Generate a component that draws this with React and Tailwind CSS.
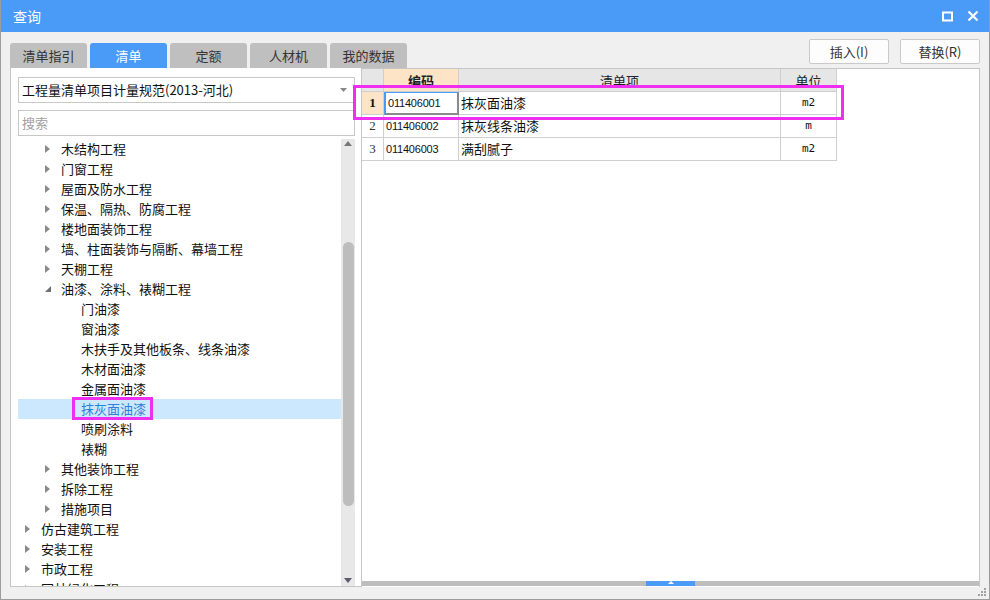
import React from 'react';

const cjk = "font-['Microsoft_YaHei','Noto_Sans_CJK_SC',sans-serif]";

const tree = [
  { l: 1, t: '木结构工程', a: 'r' },
  { l: 1, t: '门窗工程', a: 'r' },
  { l: 1, t: '屋面及防水工程', a: 'r' },
  { l: 1, t: '保温、隔热、防腐工程', a: 'r' },
  { l: 1, t: '楼地面装饰工程', a: 'r' },
  { l: 1, t: '墙、柱面装饰与隔断、幕墙工程', a: 'r' },
  { l: 1, t: '天棚工程', a: 'r' },
  { l: 1, t: '油漆、涂料、裱糊工程', a: 'd' },
  { l: 2, t: '门油漆' },
  { l: 2, t: '窗油漆' },
  { l: 2, t: '木扶手及其他板条、线条油漆' },
  { l: 2, t: '木材面油漆' },
  { l: 2, t: '金属面油漆' },
  { l: 2, t: '抹灰面油漆', sel: true },
  { l: 2, t: '喷刷涂料' },
  { l: 2, t: '裱糊' },
  { l: 1, t: '其他装饰工程', a: 'r' },
  { l: 1, t: '拆除工程', a: 'r' },
  { l: 1, t: '措施项目', a: 'r' },
  { l: 0, t: '仿古建筑工程', a: 'r' },
  { l: 0, t: '安装工程', a: 'r' },
  { l: 0, t: '市政工程', a: 'r' },
  { l: 0, t: '园林绿化工程', a: 'r' },
];

const rows = [
  { n: '1', code: '011406001', name: '抹灰面油漆', unit: 'm2' },
  { n: '2', code: '011406002', name: '抹灰线条油漆', unit: 'm' },
  { n: '3', code: '011406003', name: '满刮腻子', unit: 'm2' },
];

const tabs = ['清单指引', '清单', '定额', '人材机', '我的数据'];

const Arrow = ({ kind }) =>
  kind === 'd' ? (
    <svg width="6" height="6" viewBox="0 0 6 6">
      <path d="M6 0 L6 6 L0 6 Z" fill="#707070" />
    </svg>
  ) : (
    <svg width="5" height="8" viewBox="0 0 5 8">
      <path d="M0 0 L5 4 L0 8 Z" fill="#8a8a8a" />
    </svg>
  );

const TreeRow = ({ item }) => {
  const pad = 7 + item.l * 20;
  return (
    <div
      className={`relative flex h-[20px] shrink-0 items-center ${item.sel ? 'bg-[#cce8ff] text-[#2f7fd8]' : 'text-[#111]'}`}
      style={{ paddingLeft: pad }}
    >
      <div className="flex w-[16px] items-center">{item.a && <Arrow kind={item.a} />}</div>
      <span className="text-[13px] leading-[20px] whitespace-nowrap">{item.t}</span>
      {item.sel && (
        <div className="absolute top-[-2px] left-[54px] h-[23px] w-[81px] border-[3px] border-[#f02ef0]" />
      )}
    </div>
  );
};

const App = () => {
  return (
    <div className={`relative flex h-[600px] w-[990px] flex-col border-x border-b border-[#9c9c9c] bg-[#f0f0f0] ${cjk}`}>
      {/* title bar */}
      <div className="flex h-[32px] shrink-0 items-center justify-between bg-[#4a9af8] pr-[10px] pl-[12px]">
        <span className="text-[14px] text-white">查询</span>
        <div className="flex items-center gap-[14px]">
          <svg width="11" height="11" viewBox="0 0 11 11">
            <rect x="1" y="1.5" width="9" height="8" fill="none" stroke="#fff" strokeWidth="2" />
          </svg>
          <svg width="12" height="12" viewBox="0 0 12 12">
            <path d="M1.5 1.5 L10.5 10.5 M10.5 1.5 L1.5 10.5" stroke="#fff" strokeWidth="2.2" />
          </svg>
        </div>
      </div>

      <div className="flex flex-1 flex-col px-[9px]">
        {/* tabs + buttons */}
        <div className="flex h-[36px] shrink-0 justify-between">
          <div className="flex items-end gap-[3px]">
            {tabs.map((t) => (
              <div
                key={t}
                className={`flex h-[25px] w-[77px] items-center justify-center rounded-t-[3px] text-[13px] ${t === '清单' ? 'bg-[#4a9af8] text-white' : 'bg-[#bfbfbf] text-[#333]'}`}
              >
                {t}
              </div>
            ))}
          </div>
          <div className="flex gap-[11px] pt-[7px]">
            {['插入(I)', '替换(R)'].map((b) => (
              <div
                key={b}
                className="flex h-[25px] w-[80px] items-center justify-center rounded-[2px] border border-[#c9c9c9] bg-[#fdfdfd] text-[13px] text-[#333]"
              >
                {b}
              </div>
            ))}
          </div>
        </div>

        {/* content */}
        <div className="flex h-[519px] shrink-0">
          {/* left panel */}
          <div className="flex w-[352px] shrink-0 flex-col border-x border-b border-[#c6c6c6] bg-white pt-[9px] pl-[7px]">
            <div className="relative flex h-[26px] w-[337px] items-center border border-[#c8c8c8] pl-[3px] text-[13px] text-[#111]">
              工程量清单项目计量规范(2013-河北)
              <svg className="absolute top-[10px] right-[7px]" width="7" height="4" viewBox="0 0 7 4">
                <path d="M0 0 L7 0 L3.5 4 Z" fill="#888" />
              </svg>
            </div>
            <div className="mt-[7px] flex h-[26px] w-[337px] items-center border border-[#c8c8c8] pl-[3px] text-[13px] text-[#a0a0a0]">
              搜索
            </div>
            <div className="mt-[3px] flex min-h-0 flex-1">
              <div className="flex w-[323px] flex-col overflow-hidden">
                {tree.map((it) => (
                  <TreeRow key={it.t} item={it} />
                ))}
              </div>
              <div className="flex w-[14px] flex-col items-center bg-[#e8e8e8] pt-[2px] pb-[3px]">
                <svg width="8" height="5" viewBox="0 0 8 5">
                  <path d="M0 5 L4 0 L8 5 Z" fill="#777" />
                </svg>
                <div className="mt-[96px] h-[264px] w-[11px] rounded-full bg-[#bdbdbd]" />
                <div className="flex-1" />
                <svg width="8" height="5" viewBox="0 0 8 5">
                  <path d="M0 0 L8 0 L4 5 Z" fill="#5c5c6a" />
                </svg>
              </div>
            </div>
          </div>

          {/* right panel */}
          <div className="relative flex flex-1 flex-col border-t border-r border-[#c6c6c6] bg-white font-['Liberation_Sans',sans-serif]">
            <div className="flex flex-col">
              {/* header */}
              <div className="flex h-[23px] text-[13px] text-[#222]">
                <div className="w-[22px] border-r border-b border-[#cfcfcf] bg-[#e6e6e6]" />
                <div className={`w-[75px] overflow-hidden border-r border-b border-[#cfcfcf] bg-[#fde4c6] ${cjk}`}>
                  <div className="h-[16px] overflow-hidden pt-[3px] text-center font-bold leading-[18px]">编码</div>
                </div>
                <div className={`w-[322px] border-r border-b border-[#cfcfcf] bg-[#e6e6e6] ${cjk}`}>
                  <div className="h-[16px] overflow-hidden pt-[3px] text-center leading-[18px]">清单项</div>
                </div>
                <div className={`w-[56px] border-r border-b border-[#cfcfcf] bg-[#e6e6e6] ${cjk}`}>
                  <div className="h-[16px] overflow-hidden pt-[3px] text-center leading-[18px]">单位</div>
                </div>
              </div>
              {rows.map((r, i) => (
                <div key={r.n} className="flex h-[23px] text-[#111]">
                  <div
                    className={`flex w-[22px] items-center justify-center border-r border-b border-[#cfcfcf] font-['Liberation_Serif',serif] text-[13px] ${i === 0 ? 'bg-[#fde4c6] font-bold' : 'text-[#333]'}`}
                  >
                    {r.n}
                  </div>
                  <div
                    className={`flex w-[75px] items-center pl-[2px] text-[11px] tracking-[-0.2px] ${i === 0 ? 'border-t border-r-2 border-b-2 border-l-2 border-t-[#4a9af8] border-r-[#8a8a8a] border-b-[#8a8a8a] border-l-[#4a9af8]' : 'border-r border-b border-[#cfcfcf]'}`}
                  >
                    {r.code}
                  </div>
                  <div className={`flex w-[322px] items-center border-r border-b border-[#cfcfcf] pl-[2px] text-[13px] ${cjk}`}>
                    {r.name}
                  </div>
                  <div className="flex w-[56px] items-center justify-center border-r border-b border-[#cfcfcf] font-['DejaVu_Sans_Mono',monospace] text-[11px]">
                    {r.unit}
                  </div>
                </div>
              ))}
            </div>
            <div className="absolute top-[16px] left-[-9px] h-[35px] w-[491px] border-[3px] border-[#f02ef0]" />
            <div className="mt-auto mb-[1px] flex h-[5px] bg-[#bdbdbd]">
              <div className="ml-[284px] flex h-[5px] w-[49px] items-start justify-center bg-[#4a9af8]">
                <svg width="6" height="3" viewBox="0 0 6 3">
                  <path d="M0 3 L3 0 L6 3 Z" fill="#fff" />
                </svg>
              </div>
            </div>
          </div>
        </div>
      </div>

      {/* resize grip */}
      <svg className="absolute right-[2px] bottom-[2px]" width="10" height="10" viewBox="0 0 10 10">
        <rect x="7" y="1" width="2" height="2" fill="#a0a0a0" />
        <rect x="4" y="4" width="2" height="2" fill="#a0a0a0" />
        <rect x="7" y="4" width="2" height="2" fill="#a0a0a0" />
        <rect x="1" y="7" width="2" height="2" fill="#a0a0a0" />
        <rect x="4" y="7" width="2" height="2" fill="#a0a0a0" />
        <rect x="7" y="7" width="2" height="2" fill="#a0a0a0" />
      </svg>
    </div>
  );
};

export default App;
